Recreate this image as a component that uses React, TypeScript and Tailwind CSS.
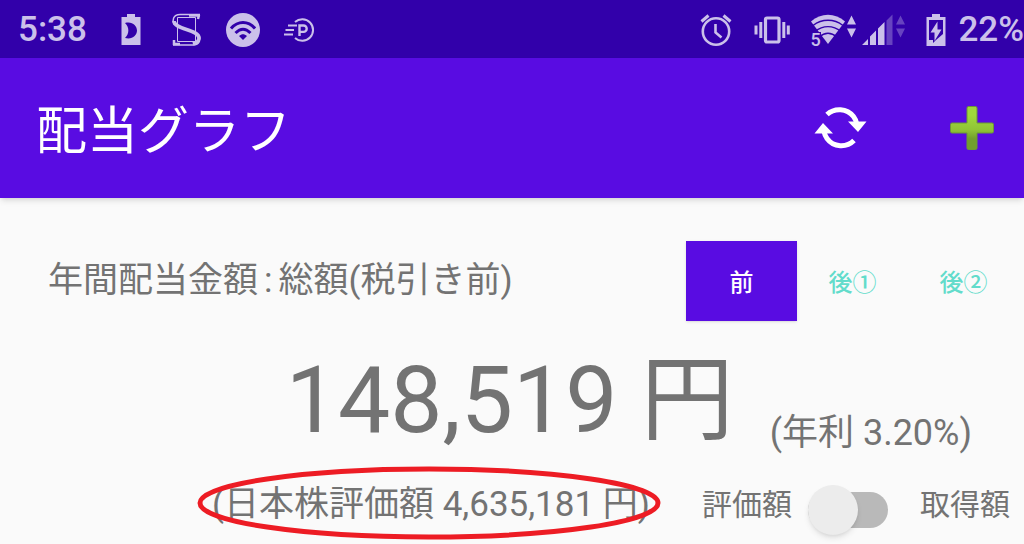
import React, { useState } from 'react';
import clsx from 'clsx';

type TaxMode = 'before' | 'after1' | 'after2';

const taxModes: { id: TaxMode; label: string }[] = [
  { id: 'before', label: '前' },
  { id: 'after1', label: '後①' },
  { id: 'after2', label: '後②' },
];

function NightBatteryIcon() {
  return (
    <svg className="h-9 w-10" viewBox="0 0 40 36" fill="currentColor" aria-hidden="true">
      <path
        fillRule="evenodd"
        d="M16 2h8v3h5.500v28h-19V5H16V2zM14 11c4.500 4 4.500 11 0 15 7 2 12-2.500 12-7.500S21 9 14 11z"
      />
    </svg>
  );
}

function LetterSIcon() {
  return (
    <svg className="h-9 w-10" viewBox="0 0 40 36" fill="none" stroke="currentColor" aria-hidden="true">
      <path strokeWidth="1" d="M10.500 5.500h18v24h-18z" />
      <path strokeWidth="1.500" d="M33 2.500H13c-7 0-8 6-6 10M6 33h20c7 0 8-6 6-10" />
      <path strokeWidth="3.600" d="M7 9c0 9 25 8 25 17 0 3-3 5-6 6" />
      <path strokeWidth="2.500" d="M33 3.500H22M6 32h7M32 3l-1 4M7 28v5" />
    </svg>
  );
}

function WifiCircleIcon() {
  return (
    <svg className="h-9 w-10" viewBox="0 0 40 36" fill="none" aria-hidden="true">
      <circle cx="20" cy="18" r="17" fill="currentColor" />
      <g stroke="#3200aa" strokeWidth="3">
        <path d="M8 16.500c7-8 17-8 24 0" />
        <path d="M12.500 21c5-5 10-5 15 0" />
      </g>
      <path d="M16 24c3-2.500 5-2.500 8 0l-4 4z" fill="#3200aa" />
    </svg>
  );
}

function FastParkingIcon() {
  return (
    <svg className="h-9 w-10" viewBox="0 0 40 36" fill="none" stroke="currentColor" strokeWidth="2" aria-hidden="true">
      <path d="M16 10A10.800 10.800 0 1 1 16 26" />
      <path d="M9 13.500h9M6.500 18H15M5 22.500h9" />
      <path strokeWidth="2.400" d="M20.500 24V13.500h4a3.200 3.200 0 0 1 0 6.400h-4" />
    </svg>
  );
}

function AlarmIcon() {
  return (
    <svg className="h-9 w-9" viewBox="0 0 36 36" fill="none" stroke="currentColor" strokeWidth="2.600" aria-hidden="true">
      <circle cx="18" cy="19.500" r="13.200" />
      <path d="M17.500 12v8.500l6 5" />
      <path strokeWidth="3" d="M3.500 9.500l7-6M32.500 9.500l-7-6" />
    </svg>
  );
}

function VibrateIcon() {
  return (
    <svg className="h-9 w-9" viewBox="0 0 36 36" fill="none" stroke="currentColor" aria-hidden="true">
      <rect x="11.500" y="6" width="13.500" height="24" rx="1.500" strokeWidth="3.200" />
      <path strokeWidth="3" d="M6.800 10v16M2 13.500v9M29.800 10v16M34.300 13.500v9" />
    </svg>
  );
}

function WifiIcon() {
  return (
    <div className="relative">
      <svg className="h-9 w-12" viewBox="0 0 48 36" fill="none" aria-hidden="true">
        <path d="M1 9.500c10-9 24-9 34 0L18 32z" fill="currentColor" />
        <g stroke="#3200aa" strokeWidth="1.400">
          <path d="M3 13.500c9-7 21-7 30 0" />
          <path d="M5 19.500c8-6.500 18-6.500 26 0" />
          <path d="M9 25c6-5 12-5 18 0" />
        </g>
        <path d="M41.500 3.500l4.500 9h-9zM41.500 25.500l4.500-9h-9z" fill="currentColor" />
      </svg>
      <span className="absolute top-5 left-0 bg-[#3200aa] text-lg leading-4 font-medium">5</span>
    </div>
  );
}

function SignalIcon() {
  return (
    <svg className="h-9 w-11" viewBox="0 0 44 36" fill="currentColor" aria-hidden="true">
      <path d="M0 33l6-6v6zM8 33V24.500l6-6V33zM16 33V16.500l6.500-6.500V33z" />
      <path opacity="0.35" d="M24.500 33V8.500l6-6V33zM38.500 3.500l4.500 9h-9zM38.500 25.500l4.500-9h-9z" />
    </svg>
  );
}

function ChargingBatteryIcon() {
  return (
    <svg className="h-9 w-5" viewBox="0 0 20 36" fill="currentColor" aria-hidden="true">
      <path
        fillRule="evenodd"
        d="M6 2h8v3h5.500v29H.5V5H6V2zM3 8v20h4v3l3-3 7-6V8z"
      />
      <path d="M11.500 9.500v8h4L8.500 29v-8.500h-4z" />
    </svg>
  );
}

function SyncIcon() {
  return (
    <svg className="h-12 w-14" viewBox="0 0 56 48" fill="none" aria-hidden="true">
      <g stroke="#fff" strokeWidth="5">
        <path d="M15 10.500c7.500-7 20-6.500 26.500 2 1.500 2 2.500 4 3 6.500" />
        <path d="M42 36.500c-7.500 7.500-20.500 7-27-2-1.500-2-2.500-4.500-3-7" />
      </g>
      <path d="M36 17.500h18.500L46 28zM2.500 29.500H21L11 19z" fill="#fff" />
    </svg>
  );
}

function PlusIcon() {
  return (
    <svg className="h-12 w-12" viewBox="0 0 48 48" aria-hidden="true">
      <defs>
        <linearGradient id="plusFill" x1="0" y1="0" x2="0" y2="1">
          <stop offset="0.2" stopColor="#9fd83c" />
          <stop offset="0.55" stopColor="#8fc336" />
          <stop offset="0.75" stopColor="#719f2e" />
        </linearGradient>
      </defs>
      <path
        fill="url(#plusFill)"
        stroke="#6c9a34"
        strokeWidth="1"
        d="M20.500 2.500h7a1.500 1.500 0 0 1 1.500 1.500v15h15a1.500 1.500 0 0 1 1.500 1.500v7a1.500 1.500 0 0 1-1.500 1.500H29v15a1.500 1.500 0 0 1-1.500 1.500h-7A1.500 1.500 0 0 1 19 44V29H4a1.500 1.500 0 0 1-1.500-1.500v-7A1.500 1.500 0 0 1 4 19h15V4a1.500 1.500 0 0 1 1.500-1.500z"
      />
    </svg>
  );
}

function StatusBar() {
  return (
    <div className="flex h-[58px] items-center justify-between bg-[#3200aa] pt-0.5 pl-[18px] text-[#cbc0ea]">
      <div className="flex items-center gap-4">
        <span className="mr-2 text-[35px] leading-10 font-medium">5:38</span>
        <NightBatteryIcon />
        <LetterSIcon />
        <WifiCircleIcon />
        <FastParkingIcon />
      </div>
      <div className="flex items-center gap-5">
        <AlarmIcon />
        <VibrateIcon />
        <div className="flex gap-1">
          <WifiIcon />
          <SignalIcon />
        </div>
        <div className="flex items-center gap-3">
          <ChargingBatteryIcon />
          <span className="text-[35px] leading-10 font-medium">22%</span>
        </div>
      </div>
    </div>
  );
}

export default function App() {
  const [taxMode, setTaxMode] = useState<TaxMode>('before');
  const [useCost, setUseCost] = useState(false);

  return (
    <div
      lang="ja"
      className="min-h-screen overflow-hidden bg-[#fafafa] font-[Roboto,'Noto_Sans_CJK_JP',sans-serif] text-[#737373]"
    >
      <StatusBar />

      <header className="flex h-[140px] items-center justify-between bg-[#590ce2] pr-7 pl-9 shadow-md">
        <h1 className="pt-2 text-[51px] leading-[60px] text-white">配当グラフ</h1>
        <div className="flex items-center gap-20">
          <button type="button" aria-label="更新">
            <SyncIcon />
          </button>
          <button type="button" aria-label="追加">
            <PlusIcon />
          </button>
        </div>
      </header>

      <main className="pt-[43px]">
        <div className="flex items-center justify-between pr-[5px] pl-12">
          <h2 className="text-[35px] leading-10">
            年間配当金額<span className="px-1.5">:</span>総額(税引き前)
          </h2>
          <div className="flex">
            {taxModes.map((mode) => (
              <button
                key={mode.id}
                type="button"
                aria-pressed={taxMode === mode.id}
                onClick={() => setTaxMode(mode.id)}
                className={clsx(
                  'h-20 w-[111px] pt-1 text-2xl font-medium',
                  taxMode === mode.id ? 'bg-[#590ce2] text-white shadow' : 'text-[#62dccb]'
                )}
              >
                {mode.label}
              </button>
            ))}
          </div>
        </div>

        <div className="mt-8 flex items-end justify-end gap-9 pr-[52px]">
          <p className="pb-1 text-[93px] leading-[96px]">148,519 円</p>
          <p className="text-[36px] leading-10">(年利 3.20%)</p>
        </div>

        <div className="mt-8 flex items-start justify-end gap-[52px] pr-[14px]">
          <p className="relative text-[35px] leading-10">
            (日本株評価額 4,635,181 円)
            <svg
              className="absolute -top-5 -left-4 h-[76px] w-[466px]"
              viewBox="0 0 466 76"
              fill="none"
              aria-hidden="true"
            >
              <ellipse cx="233" cy="38" rx="229" ry="34" stroke="#ed1c24" strokeWidth="5" />
            </svg>
          </p>
          <label className="flex items-start text-[30px] leading-10">
            <span>評価額</span>
            <span className="relative mr-8 ml-4 flex h-[50px] w-20 items-center">
              <input
                type="checkbox"
                role="switch"
                checked={useCost}
                onChange={(e) => setUseCost(e.target.checked)}
                className="peer h-9 w-full appearance-none rounded-full bg-[#b9b9b9]"
              />
              <span className="absolute top-0 left-0 size-[50px] rounded-full bg-[#ececec] shadow-md peer-checked:left-[30px]" />
            </span>
            <span>取得額</span>
          </label>
        </div>
      </main>
    </div>
  );
}
